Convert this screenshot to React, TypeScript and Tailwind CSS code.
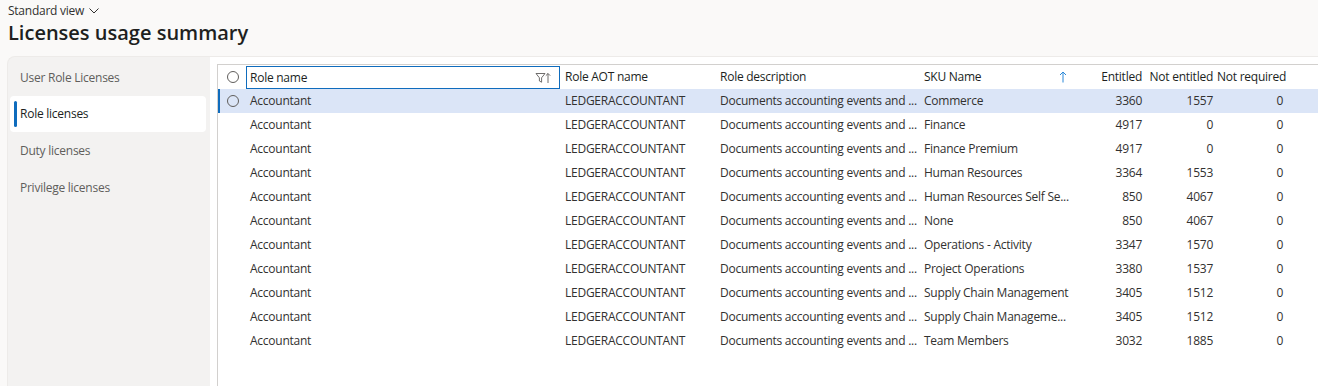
import React from "react";

const rows: [string, string, string][] = [
  ["Commerce", "3360", "1557"],
  ["Finance", "4917", "0"],
  ["Finance Premium", "4917", "0"],
  ["Human Resources", "3364", "1553"],
  ["Human Resources Self Se...", "850", "4067"],
  ["None", "850", "4067"],
  ["Operations - Activity", "3347", "1570"],
  ["Project Operations", "3380", "1537"],
  ["Supply Chain Management", "3405", "1512"],
  ["Supply Chain Manageme...", "3405", "1512"],
  ["Team Members", "3032", "1885"],
];

const Circle = () => (
  <span className="block w-[12px] h-[12px] rounded-full border border-[#605e5c]" />
);

export default function App() {
  return (
    <div
      className="w-[1318px] h-[386px] overflow-hidden bg-[#faf9f8] text-[#323130] tracking-[-0.25px]"
      style={{ fontFamily: '"Open Sans", "Noto Sans", sans-serif' }}
    >
      <div className="pl-[8px] pt-[3px] h-[56px]">
        <div className="flex items-center gap-[5px] text-[12px] leading-[16px] text-[#323130]">
          <span>Standard view</span>
          <svg width="10" height="6" viewBox="0 0 10 6" fill="none">
            <path d="M0.5 0.5L5 5L9.5 0.5" stroke="#323130" strokeWidth="1" />
          </svg>
        </div>
        <div className="text-[20px] leading-[28px] font-semibold text-[#201f1e] tracking-normal">
          Licenses usage summary
        </div>
      </div>
      <div className="ml-[7px] flex h-[330px] rounded-tl-[8px] border-l border-t border-[#edebe9] bg-[#f3f2f1] overflow-hidden">
        <div className="w-[202px] shrink-0 pt-[2px] text-[12px]">
          <div className="h-[37px] flex items-center pl-[12px] text-[#605e5c]">User Role Licenses</div>
          <div className="ml-[2px] mr-[4px] h-[36px] flex items-center bg-white rounded-[4px] relative">
            <span className="absolute left-[4px] top-[5px] w-[3px] h-[26px] rounded-[2px] bg-[#0f6cbd]" />
            <span className="pl-[10px] text-[#201f1e]">Role licenses</span>
          </div>
          <div className="h-[37px] flex items-center pl-[12px] text-[#605e5c]">Duty licenses</div>
          <div className="h-[37px] flex items-center pl-[12px] text-[#605e5c]">Privilege licenses</div>
        </div>
        <div className="flex-1 bg-white pl-[7px] pt-[7px]">
          <div className="h-full border-l border-t border-[#d2d0ce] text-[12px]">
            <div className="flex h-[24px] items-center text-[#201f1e] whitespace-nowrap">
              <div className="w-[28px] flex justify-center pl-[1px]"><Circle /></div>
              <div className="w-[314px] h-[23px] mt-[1px] border border-[#0f6cbd] flex items-center justify-between pl-[3px] pr-[8px]">
                <span>Role name</span>
                <svg width="16" height="12" viewBox="0 0 16 12" fill="none">
                  <path d="M1 1.5H10L6.6 5.8V10.2L4.4 9V5.8Z" stroke="#605e5c" strokeWidth="0.9" strokeLinejoin="round" />
                  <path d="M13 11V1.5M10.8 3.7L13 1.5L15.2 3.7" stroke="#605e5c" strokeWidth="0.9" />
                </svg>
              </div>
              <div className="w-[155px] pl-[5px]">Role AOT name</div>
              <div className="w-[204px] pl-[5px]">Role description</div>
              <div className="w-[181px] pl-[5px] flex items-center">
                <span>SKU Name</span>
                <svg className="ml-[78px]" width="8" height="12" viewBox="0 0 8 12" fill="none">
                  <path d="M4 11.5V1M1 4L4 1L7 4" stroke="#2b88d8" strokeWidth="1" />
                </svg>
              </div>
              <div className="w-[46px] text-right pr-[4px]">Entitled</div>
              <div className="w-[71px] text-right pr-[4px]">Not entitled</div>
              <div className="w-[71px] text-right pr-[5px]">Not required</div>
            </div>
            {rows.map(([sku, ent, not], i) => (
              <div
                key={i}
                className={`flex h-[24px] items-center relative whitespace-nowrap ${i === 0 ? "bg-[#dbe5f7]" : ""}`}
              >
                {i === 0 && <span className="absolute left-0 top-0 w-[2px] h-[24px] bg-[#0f6cbd]" />}
                <div className="w-[28px] flex justify-center pl-[1px]">{i === 0 && <Circle />}</div>
                <div className="w-[314px] pl-[4px]">Accountant</div>
                <div className="w-[155px] pl-[5px]">LEDGERACCOUNTANT</div>
                <div className="w-[204px] pl-[5px]">Documents accounting events and ...</div>
                <div className="w-[181px] pl-[5px]">{sku}</div>
                <div className="w-[46px] text-right pr-[4px]">{ent}</div>
                <div className="w-[71px] text-right pr-[4px]">{not}</div>
                <div className="w-[71px] text-right pr-[5px]">0</div>
              </div>
            ))}
          </div>
        </div>
      </div>
    </div>
  );
}
